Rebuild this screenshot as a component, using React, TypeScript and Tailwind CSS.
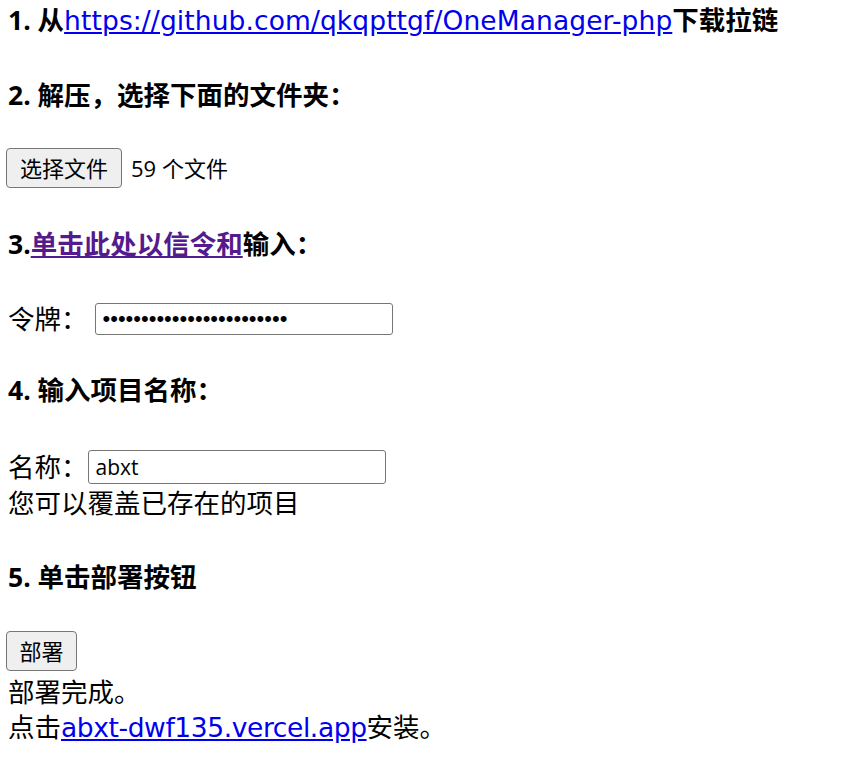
import React from 'react';

const font = { fontFamily: '"Open Sans", "Noto Sans CJK SC", sans-serif' };
const wide = { fontFamily: '"DejaVu Sans", "Noto Sans CJK SC", sans-serif' };

export default function App() {
  return (
    <div style={font} className="min-h-screen bg-white text-black px-2 pt-[2px] text-[26.5px] leading-[36px]">
      {/* Step 1 */}
      <div className="h-[36px] font-bold whitespace-nowrap">
        1. 从<a href="#" style={wide} className="text-[#0000ee] underline font-normal tracking-[0.1px]">https://github.com/qkqpttgf/OneManager-php</a>下载拉链
      </div>

      {/* Step 2 */}
      <div className="mt-[39px] h-[36px] font-bold">2. 解压，选择下面的文件夹：</div>

      <div className="mt-[35px] -ml-[2px] flex items-center gap-[9px] h-[40px]">
        <button className="h-[40px] px-[13px] text-[22px] leading-none rounded-[4px] border border-[#767676] bg-[#efefef]">
          选择文件
        </button>
        <span className="text-[22px]">59 个文件</span>
      </div>

      {/* Step 3 */}
      <div className="mt-[38px] h-[36px] font-bold">
        3.<a href="#" className="text-[#551a8b] underline">单击此处以信令和</a>输入：
      </div>

      <div className="mt-[39px] h-[36px] flex items-center">
        <span className="shrink-0 whitespace-nowrap">令牌：</span>
        <input
          type="text"
          readOnly
          defaultValue="••••••••••••••••••••••••"
          style={{ fontFamily: '"Liberation Sans", Arial, sans-serif' }}
          className="ml-[7px] w-[298px] h-[32px] px-[7px] text-[22px] border border-[#767676] rounded-[3px] outline-none"
        />
      </div>

      {/* Step 4 */}
      <div className="mt-[35px] h-[36px] font-bold">4. 输入项目名称：</div>

      <div className="mt-[41px] h-[36px] flex items-center">
        <span className="shrink-0 whitespace-nowrap">名称：</span>
        <input
          type="text"
          readOnly
          defaultValue="abxt"
          className="w-[298px] h-[34px] px-[7px] text-[21px] border border-[#767676] rounded-[3px] outline-none"
        />
      </div>
      <div className="h-[36px]">您可以覆盖已存在的项目</div>

      {/* Step 5 */}
      <div className="mt-[38px] h-[36px] font-bold">5. 单击部署按钮</div>

      <div className="mt-[36px] -ml-[2px] h-[40px]">
        <button className="h-[40px] w-[71px] text-[22px] leading-none rounded-[4px] border border-[#767676] bg-[#efefef]">
          部署
        </button>
      </div>
      <div className="mt-[3px] h-[36px]">部署完成。</div>
      <div style={wide} className="h-[36px] whitespace-nowrap">
        点击<a href="#" className="text-[#0000ee] underline tracking-[-0.4px]">abxt-dwf135.vercel.app</a>安装。
      </div>
    </div>
  );
}
